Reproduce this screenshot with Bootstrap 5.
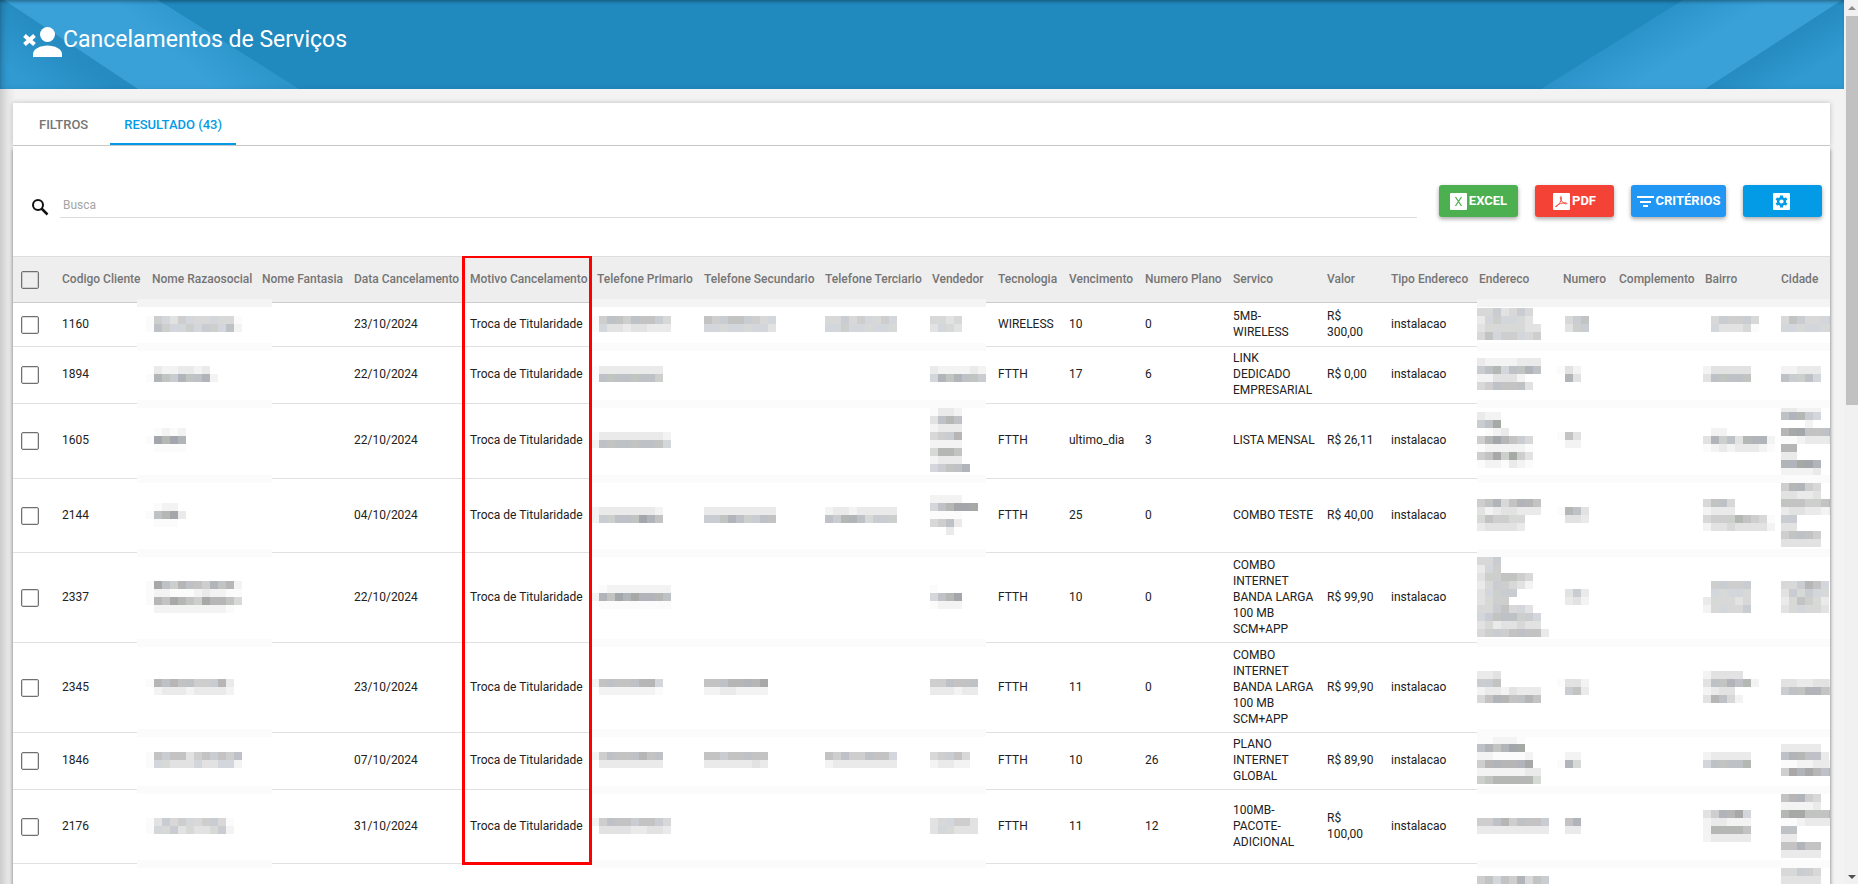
<!DOCTYPE html>
<html lang="pt-BR">
<head>
<meta charset="utf-8">
<meta name="viewport" content="width=device-width, initial-scale=1">
<title>Cancelamentos de Serviços</title>
<link href="https://cdn.jsdelivr.net/npm/bootstrap@5.3.0/dist/css/bootstrap.min.css" rel="stylesheet">
<style>
  html, body { height: 100%; }
  body { font-family: Roboto, "Liberation Sans", sans-serif; font-size: 12px; line-height: 16px; color: #212121; background: #f3f3f3; }
  .edge { min-width: 0; background: linear-gradient(to right, rgba(0,0,0,.16), rgba(0,0,0,.05) 8px, transparent 16px); }
  .page-head { height: 89px; background: #2089be; padding: 24px 0 0 21px; }
  .page-head .art { position: absolute; top: 0; height: 89px; }
  .page-head .shade { position: absolute; inset: 0; box-shadow: inset 0 3px 3px -1px rgba(0,0,0,.25), inset 5px 0 7px -3px rgba(0,0,0,.25); }
  .page-head h1 { font-size: 23px; line-height: 32px; font-weight: 400; }
  .sheet { margin: 14px 14px 0 13px; }
  .tab-bar { height: 43px; background: #fff; border-bottom: 1px solid #ccc; box-shadow: 0 0 5px rgba(0,0,0,.22); padding-left: 11px; }
  .tab-bar .nav-link { font-size: 13px; line-height: 16px; font-weight: 500; color: #757575; padding: 14px 14px 10px; border-bottom: 2px solid transparent; }
  .tab-bar .nav-item:first-child .nav-link { padding-left: 15px; }
  .tab-bar .nav-link.active { color: #039be5; border-color: #039be5; }
  .panel { background: #fff; box-shadow: 0 3px 4px rgba(0,0,0,.55); }
  .tools { height: 110px; padding: 39px 8px 0 17px; }
  .search-box { border: 0; border-bottom: 1px solid #ddd; height: 33px; padding: 8px 3px 0; font-size: 12px; outline: 0; }
  .search-box::placeholder { color: #a5a5a5; opacity: 1; }
  .tool { width: 79px; height: 32px; padding: 0; font-size: 13px; font-weight: 700; line-height: 16px; color: #fff; border: 0; border-radius: 3px; box-shadow: 0 2px 4px rgba(0,0,0,.35); }
  .tool:hover { color: #fff; }
  .tool svg { margin-right: 2px; }
  .tool-wide { width: 95px; }
  .tool-gap { gap: 17px; margin-left: 22px; }
  .grid-table { table-layout: fixed; width: 1888px; border-collapse: separate; border-spacing: 0; }
  .grid-table th, .grid-table td { position: relative; vertical-align: middle; padding: 0 7px 2px; border-bottom: 1px solid #e0e0e0; }
  .grid-table th { height: 47px; background: #eee; color: #757575; font-weight: 500; white-space: nowrap; border-top: 1px solid #ddd; border-bottom-color: #ccc; }
  .grid-table th:first-child, .grid-table td:first-child { padding: 0 8px 2px; }
  .grid-table .tight { padding-right: 0; }
  .h-2 { height: 44px; } .h-3 { height: 57px; } .h-4 { height: 74px; } .h-5 { height: 90px; }
  .tick { display: block; appearance: none; width: 18px; height: 18px; margin: 2px 0 0; border: 1px solid #707070; border-radius: 2px; background: #fff; box-shadow: inset 0 0 0 1px rgba(112,112,112,.25); }
  th .tick { background: transparent; }
  .grid-table .pad-0 { padding-left: 1px; }
  .grid-table .pad-s { padding-left: 5px; }
  .veil { display: block; }
  .band::after { content: ""; position: absolute; z-index: 1; bottom: -5px; height: 8px; background: #fbfbfb; }
  th.band::after { background: #f4f4f4; }
  .band-name::after { left: -8px; width: 135px; }
  .band-phone::after { left: 2px; width: 394px; }
  .band-place::after { left: 5px; width: 353px; }
  .flagged::before { content: ""; position: absolute; z-index: 2; inset: 0 -2px -1px -1px; border: 0 solid #f00; border-width: 0 3px; }
  th.flagged::before { top: -2px; border-top-width: 3px; }
  .flag-end.flagged::before { bottom: -2px; border-bottom-width: 3px; }
  .rail { width: 14px; background: #f1f1f1; padding-left: 2px; }
  .rail .thumb { height: 44%; background: #c1c1c1; }
</style>
</head>
<body class="d-flex overflow-hidden">
<div class="flex-grow-1 overflow-hidden edge">
  <header class="page-head position-relative overflow-hidden">
    <svg class="art start-0" width="300" viewBox="0 0 300 89" aria-hidden="true">
      <defs>
        <linearGradient id="bandL" gradientUnits="userSpaceOnUse" x1="190" y1="70" x2="225" y2="30"><stop offset="0" stop-color="#39a1d8"/><stop offset="1" stop-color="#2c95ca"/></linearGradient>
        <linearGradient id="foldL" gradientUnits="userSpaceOnUse" x1="68" y1="46" x2="34" y2="88"><stop offset="0" stop-color="#258bc0"/><stop offset="1" stop-color="#309ad1"/></linearGradient>
      </defs>
      <path d="M0 0H158L299 89H0z" fill="url(#bandL)"/><path d="M0 0H4L138 89H0z" fill="url(#foldL)"/>
    </svg>
    <svg class="art end-0" width="303" viewBox="0 0 303 89" aria-hidden="true">
      <defs>
        <linearGradient id="bandR" gradientUnits="userSpaceOnUse" x1="75" y1="42" x2="100" y2="82"><stop offset="0" stop-color="#2b93c9"/><stop offset="1" stop-color="#39a1d8"/></linearGradient>
        <linearGradient id="foldR" gradientUnits="userSpaceOnUse" x1="233" y1="45" x2="255" y2="80"><stop offset="0" stop-color="#258bc0"/><stop offset="1" stop-color="#309ad1"/></linearGradient>
      </defs>
      <path d="M142 0H303V89H0z" fill="url(#bandR)"/><path d="M301 0H303V89H164z" fill="url(#foldR)"/>
    </svg>
    <div class="shade"></div>
    <div class="position-relative d-flex text-white">
      <svg width="42" height="36" viewBox="0 0 42 36" fill="#fff" aria-hidden="true">
        <ellipse cx="26.500" cy="10.500" rx="7.500" ry="7.500"/><path d="M12 33v-3c0-5 7.500-8.500 14.500-8.500S41 25 41 30v3z"/>
        <path d="M3.500 11.500l10 9M13.500 11.500l-10 9" stroke="#fff" stroke-width="4"/>
      </svg>
      <h1 class="m-0">Cancelamentos de Serviços</h1>
    </div>
  </header>

  <main class="sheet">
    <ul class="nav tab-bar">
      <li class="nav-item"><a class="nav-link" href="#filtros">FILTROS</a></li>
      <li class="nav-item ms-2"><a class="nav-link active" aria-current="page" href="#resultado">RESULTADO (43)</a></li>
    </ul>
    <section class="panel" id="resultado">
      <div class="tools d-flex align-items-start">
        <label for="busca" class="pt-1 me-2">
          <svg width="22" height="28" viewBox="0 0 22 28" fill="none" stroke="#111" role="img" aria-label="Busca"><circle cx="8" cy="16" r="5" stroke-width="2"/><path d="M11.500 19.500l6 6" stroke-width="2.500"/></svg>
        </label>
        <input id="busca" class="search-box flex-grow-1" type="text" placeholder="Busca">
        <div class="d-flex tool-gap">
          <button type="button" class="btn tool d-flex align-items-center justify-content-center" style="background:#4caf50">
            <svg width="17" height="17" viewBox="0 0 17 17" aria-hidden="true"><rect width="17" height="17" rx="1" fill="#fff"/><path d="M5.500 4l6 9M11.500 4l-6 9" stroke="#4caf50" stroke-width="1.300"/></svg>EXCEL</button>
          <button type="button" class="btn tool d-flex align-items-center justify-content-center" style="background:#f44336">
            <svg width="17" height="17" viewBox="0 0 17 17" aria-hidden="true"><rect width="17" height="17" rx="1" fill="#fff"/><path d="M3 14c3-2 5.500-6 5.500-9.500 0-1.500-1.500-1.500-1.200.3C8 8 10 10.500 13 11c1.500 0 1-1.300-.5-1.200C9 9.800 6 10.800 3.500 12.500c-1 .8-1 1.500-.5 1.500z" fill="none" stroke="#f44336" stroke-width=".9"/></svg>PDF</button>
          <button type="button" class="btn tool tool-wide d-flex align-items-center justify-content-center" style="background:#2196f3">
            <svg width="17" height="17" viewBox="0 0 17 17" aria-hidden="true"><path d="M0 3h17v2H0zM3 8h11v2H3zM6 12h5v2H6z" fill="#fff"/></svg>CRITÉRIOS</button>
          <button type="button" class="btn tool d-flex align-items-center justify-content-center" style="background:#039be5" aria-label="Configurações">
            <svg width="17" height="17" viewBox="0 0 17 17" aria-hidden="true"><rect width="17" height="17" rx="1" fill="#fff"/><g fill="#039be5"><circle cx="8.500" cy="8.500" r="4.500"/><path d="M7 2.500h3v12H7z"/><path d="M7 2.500h3v12H7z" transform="rotate(60 8.500 8.500)"/><path d="M7 2.500h3v12H7z" transform="rotate(120 8.500 8.500)"/></g><circle cx="8.500" cy="8.500" r="2.100" fill="#fff"/></svg></button>
        </div>
      </div>
      <div class="overflow-hidden">
        <table class="grid-table">
          <colgroup id="cols"></colgroup>
          <thead><tr>
            <th scope="col"><input class="tick" type="checkbox" aria-label="Selecionar todos"></th>
            <th scope="col">Codigo Cliente</th>
            <th scope="col" class="band band-name">Nome Razaosocial</th>
            <th scope="col">Nome Fantasia</th>
            <th scope="col">Data Cancelamento</th>
            <th scope="col" class="flagged">Motivo Cancelamento</th>
            <th scope="col" class="band band-phone">Telefone Primario</th>
            <th scope="col">Telefone Secundario</th>
            <th scope="col">Telefone Terciario</th>
            <th scope="col">Vendedor</th>
            <th scope="col">Tecnologia</th>
            <th scope="col">Vencimento</th>
            <th scope="col">Numero Plano</th>
            <th scope="col">Servico</th>
            <th scope="col">Valor</th>
            <th scope="col">Tipo Endereco</th>
            <th scope="col" class="band band-place">Endereco</th>
            <th scope="col">Numero</th>
            <th scope="col">Complemento</th>
            <th scope="col">Bairro</th>
            <th scope="col">Cidade</th>
          </tr></thead>
          <tbody id="rows"></tbody>
        </table>
      </div>
    </section>
  </main>
</div>
<div class="rail vh-100 d-flex flex-column flex-shrink-0" aria-hidden="true">
  <svg width="12" height="16"><path d="M2 10l4-4 4 4z" fill="#8c8c8c"/></svg>
  <div class="thumb"></div>
  <svg class="mt-auto" width="12" height="16"><path d="M2 7h8l-4 4z" fill="#505050"/></svg>
</div>

<script src="https://cdn.jsdelivr.net/npm/bootstrap@5.3.0/dist/js/bootstrap.bundle.min.js"></script>
<script>
  const widths = [42, 90, 110, 92, 116, 127, 107, 121, 107, 66, 71, 76, 88, 94, 64, 88, 84, 56, 86, 76, 127];
  document.getElementById('cols').innerHTML = widths.map(w => `<col style="width:${w}px">`).join('');

  // Hidden values are drawn as 8px blocks: one digit per block, 1 palest to 9 darkest, "/" starts a new line.
  const shades = [255, 251, 243, 234, 226, 216, 206, 195, 182, 168];
  const tints = [[0, 0, 0], [4, 1, -4], [-5, -1, 4], [0, 0, 0], [-2, 1, -2], [3, -2, 0]];
  function veil(code) {
    if (!code) return '';
    const lines = code.split('/');
    const w = Math.max(...lines.map(l => l.length)) * 8;
    let out = '';
    lines.forEach((line, y) => [...line].forEach((c, x) => {
      if (c === '.') return;
      const t = +c > 4 ? tints[(x * 5 + y * 2 + x * x) % 6] : tints[0];
      out += `<rect x="${x * 8}" y="${y * 8}" width="8" height="8" fill="rgb(${t.map(d => shades[c] + d)})"/>`;
    }));
    return `<svg class="veil" width="${w}" height="${lines.length * 8}" shape-rendering="crispEdges" aria-hidden="true">${out}</svg>`;
  }

  // size, code, name, date, phones x3, seller, technology, due day, plan, service, value, address, number, district, city
  const data = [
    ['2', '1160', '165465555551/176556566572', '23/10/2024', '1677677765/1544344333', '766776655/555555554', '556565565/556555555', '5545/4554', 'WIRELESS', '10', '0', '5MB-<br>WIRELESS', 'R$<br>300,00', '5564565/3565554/45555544/57566556', '.567/.466', '.566665/.544451', '576555665/555555565'],
    ['3', '1894', '.3223323/187687782', '22/10/2024', '133333333/177777776', '', '', '3222232/5878776', 'FTTH', '17', '6', 'LINK<br>DEDICADO<br>EMPRESARIAL', 'R$ 0,00', '32222333/67857787/224442/5677774', '142/.84', '244444/477777', '22333/76675'],
    ['4', '1605', '.1212/19898/.1111', '22/10/2024', '1333333332/2777777775', '', '', '1332/4787/2333/5668/2222/5887/2333/56778', 'FTTH', 'ultimo_dia', '3', 'LISTA MENSAL', 'R$ 26,11', '322/679/.123/6898765/1222221/6796964/1221321', '174/.22', '.22/486748882/123233321', '33222/78865/...2/899777889/112333442/88/33/88998/22223'],
    ['4', '2144', '.122/17893/.111', '04/10/2024', '233333332/266777987', '333333333/667876677', '233233333/768875666', '2222/578999/1111/5673/..3', 'FTTH', '25', '0', 'COMBO TESTE', 'R$ 40,00', '67857887/42344333/576655/344443', '1874/.443', '5775/2333/566687651/244544442', '68865/44334/777667878/344332333/66/44/67776/44444'],
    ['5', '2337', '197687768782/122111232211/187987698875/.2222222221', '22/10/2024', '.122222222/2879898887/.111111111', '', '', '1/5789/1222', 'FTTH', '10', '0', 'COMBO<br>INTERNET<br>BANDA LARGA<br>100 MB<br>SCM+APP', 'R$ 99,90', '556/356/4667765/3566542/45666/4566/5567554/56777665/45344544/566677773', '.463/.342', '.66666/.55555/355545/255556', '556875/465655/357653/455554'],
    ['5', '2345', '18787766683/.2333233332', '23/10/2024', '277777885/.22222221', '77788889/22332222', '', '667777/333233', 'FTTH', '11', '0', 'COMBO<br>INTERNET<br>BANDA LARGA<br>100 MB<br>SCM+APP', 'R$ 99,90', '334/667/23324333/57887787', '1442/.673', '24444/4778782/2344/48752', '44334433/677887655'],
    ['3', '1846', '176774676767/155444544552', '07/10/2024', '267777877/.33333333', '77677777/33333343', '767667775/233333333', '56675/23322', 'FTTH', '10', '26', 'PLANO<br>INTERNET<br>GLOBAL', 'R$ 89,90', '112221/787899/2211112/6888889/22222233/67888885', '.22/185', '233333/577778', '33333/788773/112233222/698987889'],
    ['4', '2176', '14656556651/15564544562', '31/10/2024', '2677767765/.444433443', '', '', '455664/455444', 'FTTH', '11', '12', '100MB-<br>PACOTE-<br>ADICIONAL', 'R$<br>100,00', '667867776/333333333', '.78/.33', '468895/233222/288887/233333', '78865/22223/899777889/112333332/77/33/77877/33333'],
    ['5', '', '', '', '', '', '', '', '', '', '', '', '', '675768576/444444444/33322/77766/44433/66655/33333/55555', '', '', '55665/44444/67776/44444/66/44/66777/44444/55555/33333']
  ];
  const cell = (html, cls = '') => `<td class="${cls}">${html}</td>`;
  document.getElementById('rows').innerHTML = data.map((r, i) => `<tr class="h-${r[0]}">` + [
    cell(`<input class="tick" type="checkbox" aria-label="Selecionar ${r[1]}">`),
    cell(r[1]),
    cell(veil(r[2]), 'pad-0 band band-name'),
    cell(''),
    cell(r[3]),
    cell(r[1] && 'Troca de Titularidade', r[1] ? (i === data.length - 2 ? 'flagged flag-end' : 'flagged') : ''),
    cell(veil(r[4]), 'pad-0 band band-phone'),
    cell(veil(r[5])),
    cell(veil(r[6])),
    cell(veil(r[7]), 'pad-s'),
    cell(r[8]), cell(r[9]), cell(r[10]), cell(r[11], 'tight'), cell(r[12]),
    cell(r[1] && 'instalacao'),
    cell(veil(r[13]), 'pad-s band band-place'),
    cell(veil(r[14]), 'pad-0'),
    cell(''),
    cell(veil(r[15]), 'pad-s'),
    cell(veil(r[16]))
  ].join('') + '</tr>').join('');
</script>
</body>
</html>
